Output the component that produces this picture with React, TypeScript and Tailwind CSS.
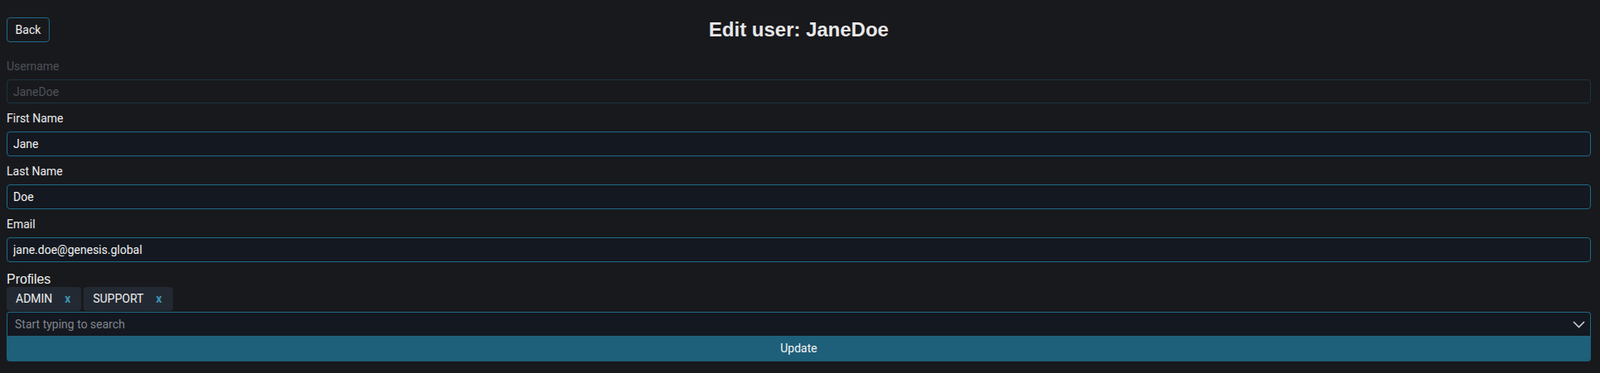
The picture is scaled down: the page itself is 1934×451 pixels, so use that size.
import { useState } from "react";

// Edit-user form, dark theme
const FIELDS: { label: string; value: string }[] = [
  { label: "First Name", value: "Jane" },
  { label: "Last Name", value: "Doe" },
  { label: "Email", value: "jane.doe@genesis.global" },
];

function Chevron() {
  return (
    <svg width="15" height="9" viewBox="0 0 15 9" fill="none" className="shrink-0">
      <path d="M1 1l6.5 6.5L14 1" stroke="#c9cbce" strokeWidth="1.6" />
    </svg>
  );
}

export default function App() {
  const [profiles, setProfiles] = useState(["ADMIN", "SUPPORT"]);
  const [values, setValues] = useState(FIELDS.map((f) => f.value));

  return (
    <div
      className="min-h-[451px] bg-[#18191d] pl-2 pr-[11px] pt-[21px] text-[14px] text-[#ececec]"
      style={{ fontFamily: "Roboto, 'Noto Sans', sans-serif" }}
    >
      <div className="grid grid-cols-[1fr_auto_1fr] items-center">
        <div>
          <button className="h-[30px] w-[52px] rounded-[4px] border border-[#1d6a86] text-[14px] text-[#f0f0f0]">
            Back
          </button>
        </div>
        <h1 className="text-[24px] font-bold leading-[30px] text-[#e8e8e8] font-['Liberation_Sans',Arial,sans-serif]">
          Edit user: JaneDoe
        </h1>
        <div />
      </div>

      <div className="mt-[19px] flex flex-col gap-[6px]">
        <label className="leading-[20px] text-[#4d5157]">Username</label>
        <input
          disabled
          value="JaneDoe"
          readOnly
          className="h-[29px] w-full rounded-[4px] border border-[#1b3542] bg-transparent pl-[7px] text-[14px] text-[#4e5258] outline-none"
        />
      </div>

      {FIELDS.map((f, i) => (
        <div key={f.label} className="mt-2 flex flex-col gap-[6px]">
          <label className="leading-[20px] text-[#ececec]">{f.label}</label>
          <input
            value={values[i]}
            onChange={(e) => setValues(values.map((v, j) => (j === i ? e.target.value : v)))}
            className="h-[30px] w-full rounded-[4px] border border-[#1d6a86] bg-[#141820] pl-[7px] text-[14px] text-[#f2f2f2] outline-none"
          />
        </div>
      ))}

      <div className="mt-[11px] text-[16px] leading-[19px] text-[#f0f0f0] font-['Liberation_Sans',Arial,sans-serif]">
        Profiles
      </div>
      <div className="flex gap-[3px]">
        {profiles.map((p) => (
          <div
            key={p}
            className="flex h-[29px] items-center gap-[15px] rounded-[4px] bg-[#232932] pl-[11px] pr-[13px] text-[14px] text-[#eeeeee]"
          >
            <span>{p}</span>
            <button
              onClick={() => setProfiles(profiles.filter((x) => x !== p))}
              className="text-[14px] font-bold text-[#3d93b3]"
            >
              x
            </button>
          </div>
        ))}
      </div>
      <div className="mt-px flex h-[29px] items-center rounded-t-[4px] border border-b-0 border-[#1d6a86] bg-[#141820] pl-[9px] pr-[6px]">
        <input
          placeholder="Start typing to search"
          className="min-w-0 flex-1 bg-transparent text-[14px] text-[#f2f2f2] outline-none placeholder:text-[#80858c]"
        />
        <Chevron />
      </div>
      <button className="h-[31px] w-full rounded-b-[4px] bg-[#1e5f79] text-[14px] text-[#f4f4f4]">
        Update
      </button>
    </div>
  );
}
